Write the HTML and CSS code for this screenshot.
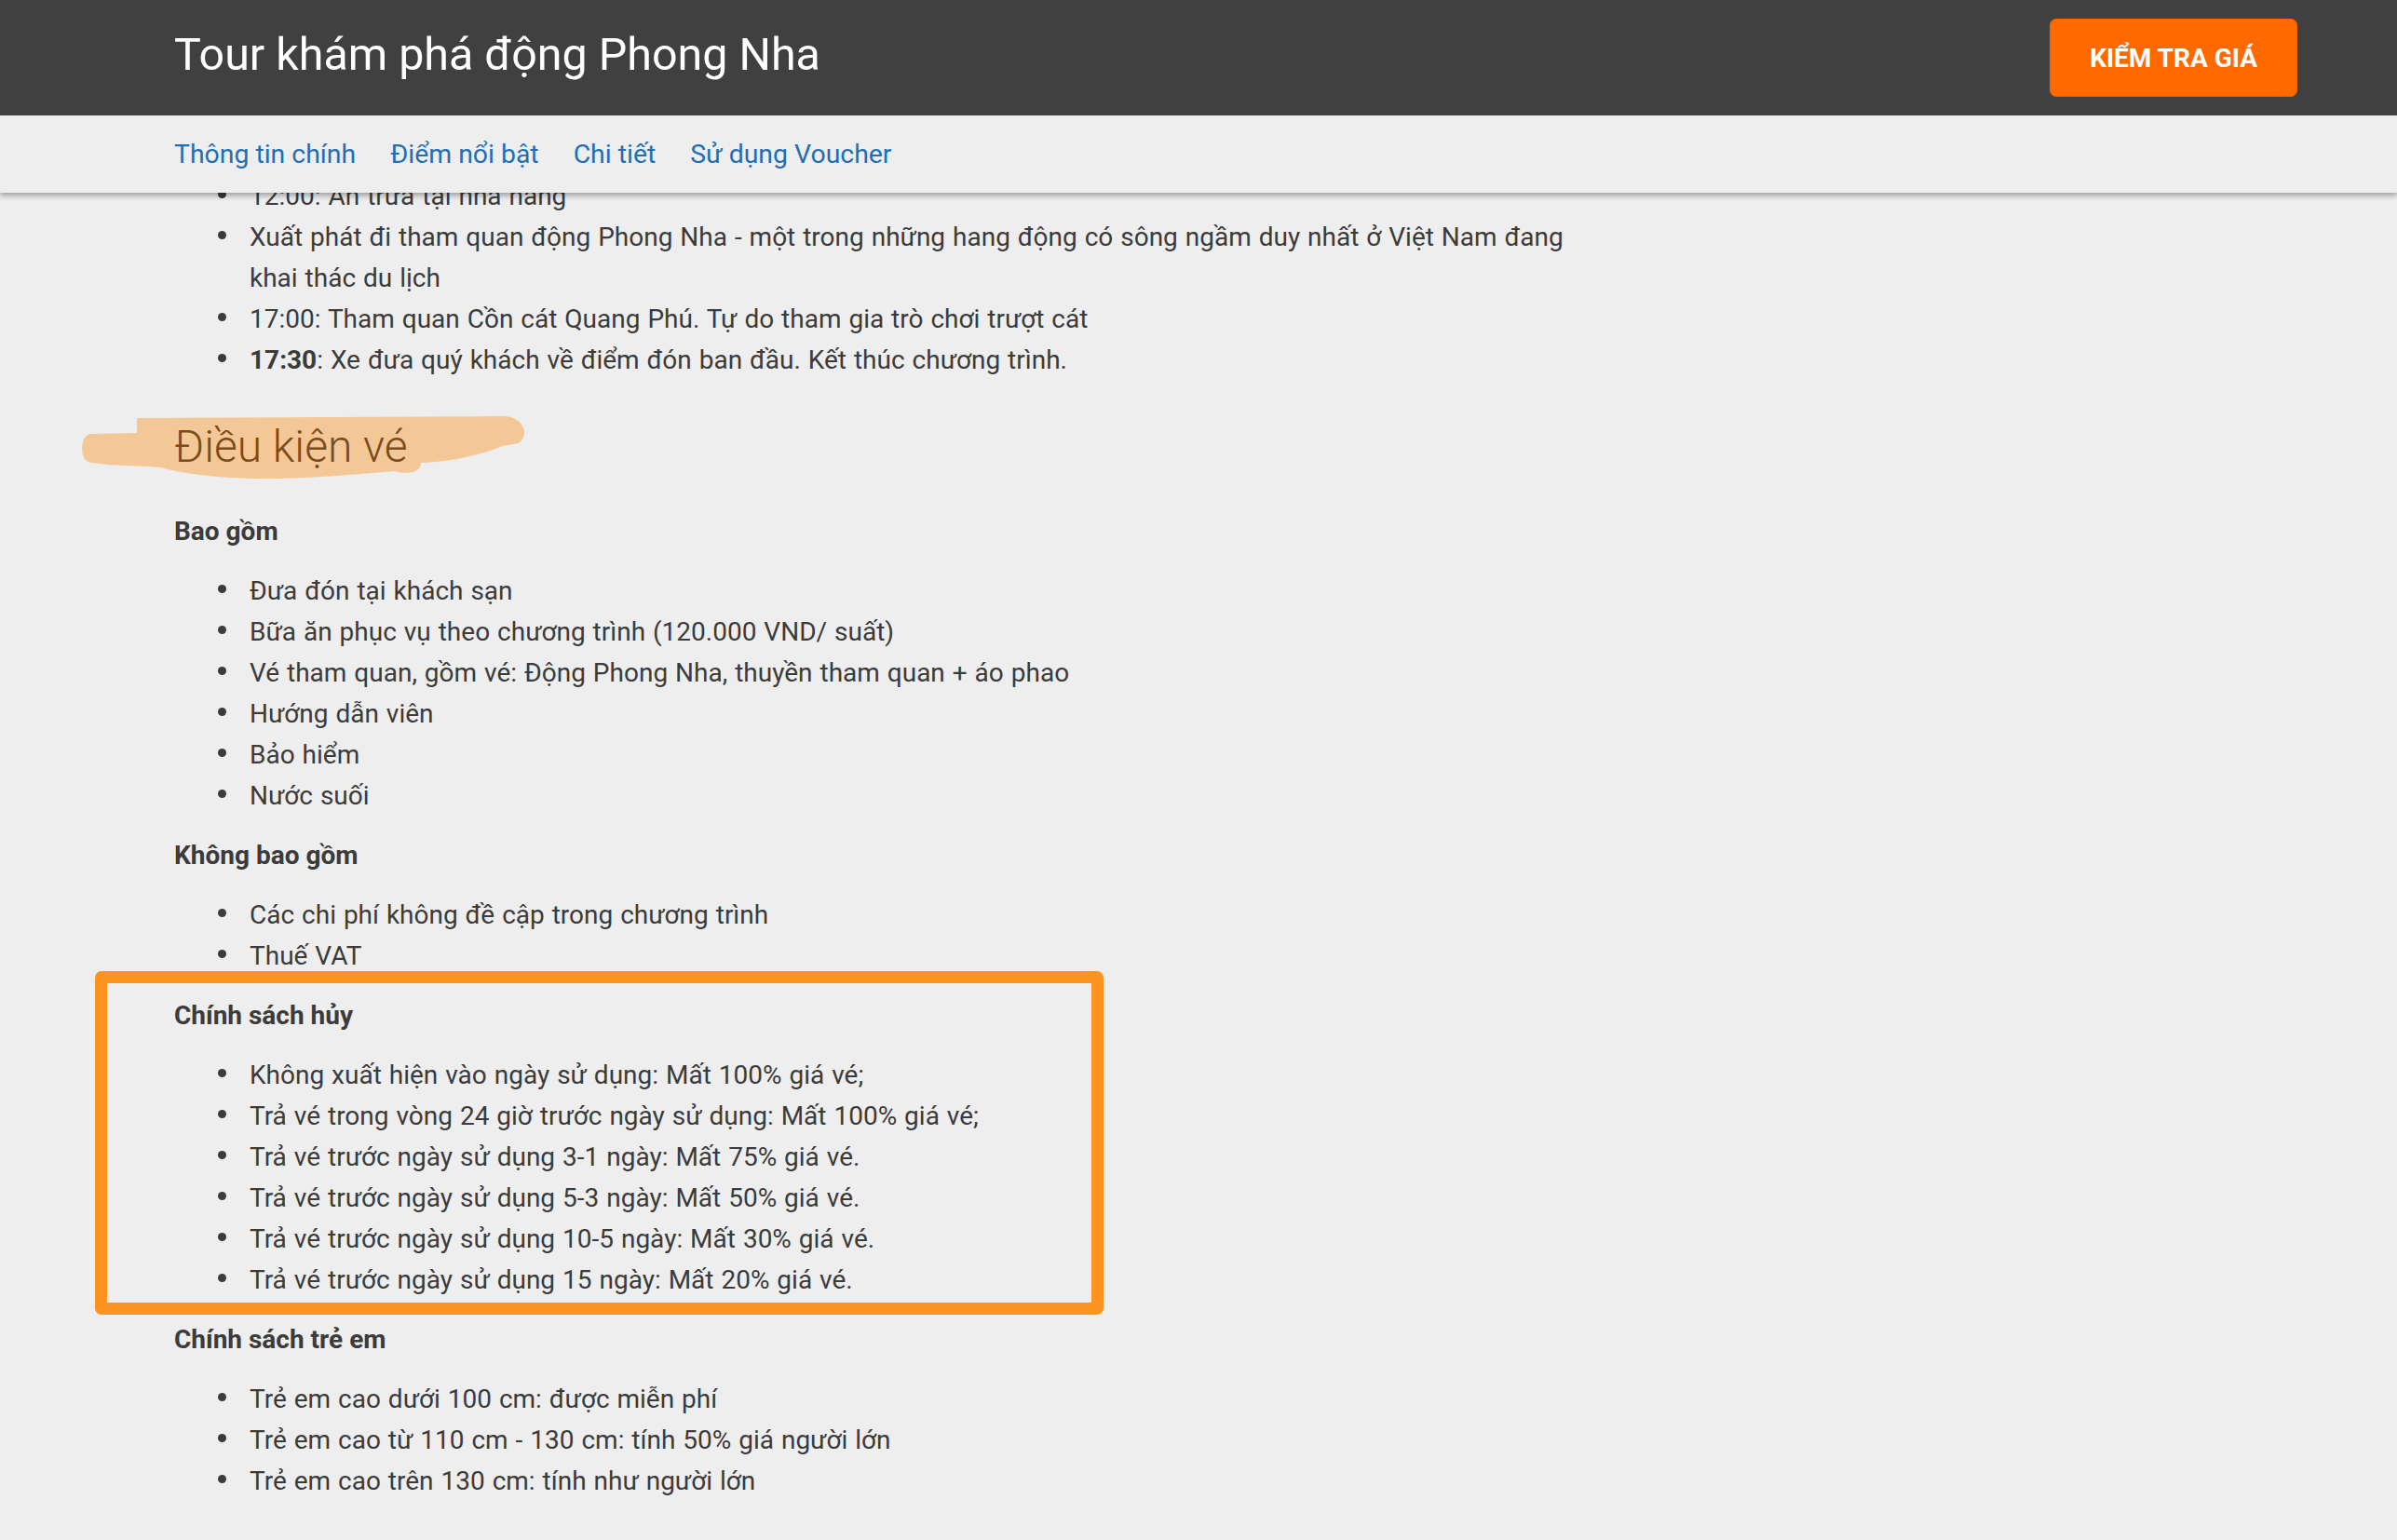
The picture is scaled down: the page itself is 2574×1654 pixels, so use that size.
FILE: index.html
```html
<!DOCTYPE html>
<html lang="vi">
<head>
<meta charset="utf-8">
<title>Tour khám phá động Phong Nha</title>
<link rel="stylesheet" href="styles.css">
</head>
<body>
<header class="topbar">
  <div class="titlebar">
    <h1 class="title">Tour khám phá động Phong Nha</h1>
    <a class="btn-price" href="#">KIỂM TRA GIÁ</a>
  </div>
  <nav class="tabs">
    <a href="#">Thông tin chính</a>
    <a href="#">Điểm nổi bật</a>
    <a href="#">Chi tiết</a>
    <a href="#">Sử dụng Voucher</a>
  </nav>
</header>

<main class="content">
  <ul class="list">
    <li>12:00: Ăn trưa tại nhà hàng</li>
    <li>Xuất phát đi tham quan động Phong Nha - một trong những hang động có sông ngầm duy nhất ở Việt Nam đang khai thác du lịch</li>
    <li>17:00: Tham quan Cồn cát Quang Phú. Tự do tham gia trò chơi trượt cát</li>
    <li><strong>17:30</strong>: Xe đưa quý khách về điểm đón ban đầu. Kết thúc chương trình.</li>
  </ul>

  <h2 class="section-title">
    <svg class="brush" viewBox="0 0 480 70" preserveAspectRatio="none" aria-hidden="true">
      <path d="M60 3 L453 1 C476 1 482 22 470 30 L453 33 C430 42 400 50 365 51 C365 62 350 64 336 60 C290 64 230 69 190 68 C140 67 105 62 86 56 C60 54 20 54 8 50 C-2 46 -1 22 10 20 L60 19 Z"/>
    </svg>
    <span>Điều kiện vé</span>
  </h2>

  <h4 class="sub">Bao gồm</h4>
  <ul class="list">
    <li>Đưa đón tại khách sạn</li>
    <li>Bữa ăn phục vụ theo chương trình (120.000 VND/ suất)</li>
    <li>Vé tham quan, gồm vé: Động Phong Nha, thuyền tham quan + áo phao</li>
    <li>Hướng dẫn viên</li>
    <li>Bảo hiểm</li>
    <li>Nước suối</li>
  </ul>

  <h4 class="sub">Không bao gồm</h4>
  <ul class="list">
    <li>Các chi phí không đề cập trong chương trình</li>
    <li>Thuế VAT</li>
  </ul>

  <section class="highlight">
    <h4 class="sub">Chính sách hủy</h4>
    <ul class="list">
      <li>Không xuất hiện vào ngày sử dụng: Mất 100% giá vé;</li>
      <li>Trả vé trong vòng 24 giờ trước ngày sử dụng: Mất 100% giá vé;</li>
      <li>Trả vé trước ngày sử dụng 3-1 ngày: Mất 75% giá vé.</li>
      <li>Trả vé trước ngày sử dụng 5-3 ngày: Mất 50% giá vé.</li>
      <li>Trả vé trước ngày sử dụng 10-5 ngày: Mất 30% giá vé.</li>
      <li>Trả vé trước ngày sử dụng 15 ngày: Mất 20% giá vé.</li>
    </ul>
  </section>

  <h4 class="sub">Chính sách trẻ em</h4>
  <ul class="list">
    <li>Trẻ em cao dưới 100 cm: được miễn phí</li>
    <li>Trẻ em cao từ 110 cm - 130 cm: tính 50% giá người lớn</li>
    <li>Trẻ em cao trên 130 cm: tính như người lớn</li>
  </ul>
</main>
</body>
</html>
```

FILE: styles.css
```css
*, *::before, *::after { box-sizing: border-box; }

html, body {
  margin: 0;
  padding: 0;
  background: #eeeeee;
}

body {
  font-family: Roboto, "Noto Sans", "Liberation Sans", sans-serif;
  font-size: 28px;
  word-spacing: 1px;
  color: #3b3b3b;
  min-height: 1654px;
}

/* ---------- fixed top bar ---------- */
.topbar {
  position: fixed;
  top: 0;
  left: 0;
  right: 0;
  z-index: 10;
  box-shadow: 0 3px 6px rgba(0, 0, 0, 0.35);
}

.titlebar {
  height: 124px;
  background: #404040;
  display: flex;
  align-items: center;
  justify-content: space-between;
  padding: 0 107px 0 187px;
}

.title {
  margin: 0 0 5px;
  font-size: 48.4px;
  font-weight: 400;
  word-spacing: 0;
  color: #ffffff;
  line-height: 1.2;
}

.btn-price {
  height: 84px;
  padding: 0 42px;
  display: flex;
  align-items: center;
  background: #ff6900;
  border: 1px solid #ea6100;
  border-radius: 7px;
  color: #ffffff;
  font-size: 28px;
  font-weight: 700;
  word-spacing: 0;
  text-decoration: none;
  white-space: nowrap;
}

.tabs {
  height: 83px;
  background: #eeeeee;
  display: flex;
  align-items: center;
  gap: 37px;
  padding-left: 187px;
}

.tabs a {
  color: #1f6fb4;
  text-decoration: none;
  font-size: 28.4px;
  word-spacing: 0;
}

/* ---------- content ---------- */
.content {
  width: 1528px;
  margin-left: 187px;
  padding-top: 169px;
  padding-bottom: 40px;
}

.list {
  margin: 20px 0;
  padding-left: 81px;
  list-style: none;
}

.list li {
  position: relative;
  line-height: 44px;
}

.list li::before {
  content: "";
  position: absolute;
  left: -34px;
  top: 15px;
  width: 9px;
  height: 9px;
  border-radius: 50%;
  background: #3b3b3b;
}

.list strong {
  font-weight: 700;
}

.section-title {
  position: relative;
  isolation: isolate;
  margin: 42px 0 40px;
  font-size: 48px;
  font-weight: 300;
  word-spacing: 0;
  line-height: 1.2;
  color: #7b4c1b;
}

.brush {
  position: absolute;
  left: -100px;
  top: -5px;
  width: 480px;
  height: 70px;
  z-index: -1;
  fill: #f4c896;
}

.sub {
  margin: 0;
  font-size: 28px;
  font-weight: 700;
  word-spacing: 0;
  line-height: 44px;
  color: #3b3b3b;
}

.highlight {
  position: relative;
}

.highlight::before {
  content: "";
  position: absolute;
  top: -26px;
  bottom: -15px;
  left: -85px;
  width: 1083px;
  border: 13px solid #fe9420;
  border-radius: 7px;
  pointer-events: none;
}
```
